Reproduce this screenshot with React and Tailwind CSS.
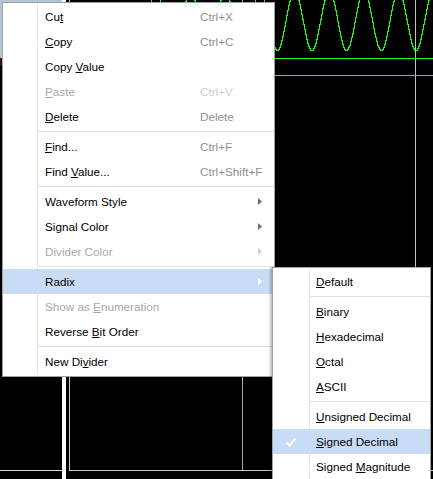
import React from "react";

const mainItems = [
  { label: "Cu&t", shortcut: "Ctrl+X" },
  { label: "&Copy", shortcut: "Ctrl+C" },
  { label: "Copy &Value" },
  { label: "&Paste", shortcut: "Ctrl+V", disabled: true },
  { label: "&Delete", shortcut: "Delete" },
  { sep: true },
  { label: "&Find...", shortcut: "Ctrl+F" },
  { label: "Find &Value...", shortcut: "Ctrl+Shift+F" },
  { sep: true },
  { label: "Waveform Style", sub: true },
  { label: "Signal Color", sub: true },
  { label: "Divider Color", sub: true, disabled: true },
  { sep: true },
  { label: "Radix", sub: true, active: true },
  { label: "Show as &Enumeration", disabled: true },
  { label: "Reverse &Bit Order" },
  { sep: true },
  { label: "New Di&vider" },
];

const radixItems = [
  { label: "&Default" },
  { sep: true },
  { label: "&Binary" },
  { label: "&Hexadecimal" },
  { label: "&Octal" },
  { label: "&ASCII" },
  { sep: true },
  { label: "&Unsigned Decimal" },
  { label: "&Signed Decimal", active: true, checked: true },
  { label: "Signed &Magnitude" },
];

// "&" marks the mnemonic letter
const Label = ({ text }) => {
  const i = text.indexOf("&");
  if (i < 0) return <>{text}</>;
  return (
    <>
      {text.slice(0, i)}
      <span className="underline decoration-1 underline-offset-[1px]">{text[i + 1]}</span>
      {text.slice(i + 2)}
    </>
  );
};

const Arrow = ({ color }) => (
  <svg width="4" height="7" viewBox="0 0 4 7" className="block">
    <polygon points="0,0 4,3.5 0,7" fill={color} />
  </svg>
);

const Check = () => (
  <svg width="12" height="10" viewBox="0 0 12 10" className="block">
    <path d="M1.5 5.5 L4.5 8.5 L10.5 1.5" stroke="#ffffff" strokeWidth="2.2" fill="none" />
  </svg>
);

const Separator = ({ gutter }) => (
  <div className="flex h-[5px]">
    <div className={`${gutter} shrink-0 border-r border-[#e6e6e6]`} />
    <div className="flex flex-1 items-center">
      <div className="h-px w-full bg-[#e0e0e0]" />
    </div>
  </div>
);

const MainRow = ({ item }) => {
  const text = item.disabled ? "text-[#a8a8a8]" : "text-black";
  let arrow = "#707070";
  if (item.disabled) arrow = "#cfcfcf";
  if (item.active) arrow = "#ffffff";
  return (
    <div className={`flex h-[25px] ${item.active ? "bg-[#c9dcf6]" : ""}`}>
      <div className={`w-[35px] shrink-0 border-r ${item.active ? "border-transparent" : "border-[#e6e6e6]"}`} />
      <div className="flex flex-1 items-center pl-[7px] pr-[12px] leading-[25px]">
        <span className={`w-[155px] shrink-0 whitespace-nowrap ${text}`}>
          <Label text={item.label} />
        </span>
        <span className={`flex-1 whitespace-nowrap ${item.disabled ? "text-[#cccccc]" : "text-[#8f8f8f]"}`}>
          {item.shortcut}
        </span>
        {item.sub && <Arrow color={arrow} />}
      </div>
    </div>
  );
};

const SubRow = ({ item }) => (
  <div className={`flex h-[25px] ${item.active ? "bg-[#c9dcf6]" : ""}`}>
    <div
      className={`flex w-[37px] shrink-0 items-center justify-center border-r ${
        item.active ? "border-transparent" : "border-[#e6e6e6]"
      }`}
    >
      {item.checked && <Check />}
    </div>
    <div className="flex-1 whitespace-nowrap pl-[6px] leading-[25px] text-black">
      <Label text={item.label} />
    </div>
  </div>
);

// sampled sine, drawn as steps like the viewer does
const wavePath = () => {
  const P = 34.67;
  let d = "";
  for (let x = 80; x <= 364; x++) {
    const t = (2 * Math.PI * (x - 345)) / P;
    const y = Math.round(50 - 29.4 * (1 - Math.cos(t))) + 0.5;
    d += x === 80 ? `M${x} ${y}` : `H${x}V${y}`;
  }
  return d;
};

const Waveform = () => (
  <svg width="363" height="470" className="block" shapeRendering="crispEdges">
    <line x1="172.5" y1="0" x2="172.5" y2="470" stroke="#a8a8a8" />
    <line x1="345.5" y1="0" x2="345.5" y2="470" stroke="#c0c0c0" />
    <path d={wavePath()} stroke="#1bff1b" strokeWidth="1" fill="none" />
    <line x1="0" y1="58.5" x2="363" y2="58.5" stroke="#1bff1b" />
    <line x1="0" y1="75.5" x2="363" y2="75.5" stroke="#1bff1b" />
  </svg>
);

export default function App() {
  return (
    <div className="relative h-[479px] w-[433px] overflow-hidden bg-black font-['Liberation_Sans',Arial,sans-serif] text-[11.7px]">
      {/* viewer behind the menu */}
      <div className="flex h-full">
        <div className="w-[62px] shrink-0">
          <div className="flex h-[471px] flex-col border-b border-[#d8d8d8]">
            <div className="h-[58px] bg-[#b7c4d5]" />
            <div className="h-[8px] bg-[#2a1410]" />
          </div>
        </div>
        <div className="w-[4px] shrink-0 bg-white" />
        <div className="ml-[3px] h-[471px] flex-1 border-b border-l border-[#c8c8c8]">
          <Waveform />
        </div>
      </div>

      {/* context menu */}
      <div className="absolute left-[2px] top-[2px] w-[273px] border border-[#a0a0a0] bg-white pt-px pb-[2px]">
        {mainItems.map((item, i) =>
          item.sep ? <Separator key={i} gutter="w-[35px]" /> : <MainRow key={i} item={item} />
        )}
      </div>

      {/* Radix submenu */}
      <div className="absolute left-[272px] top-[267px] w-[159px] border border-[#a0a0a0] bg-white py-px shadow-[-2px_0_2px_rgba(0,0,0,0.25)]">
        {radixItems.map((item, i) =>
          item.sep ? <Separator key={i} gutter="w-[37px]" /> : <SubRow key={i} item={item} />
        )}
      </div>
    </div>
  );
}
